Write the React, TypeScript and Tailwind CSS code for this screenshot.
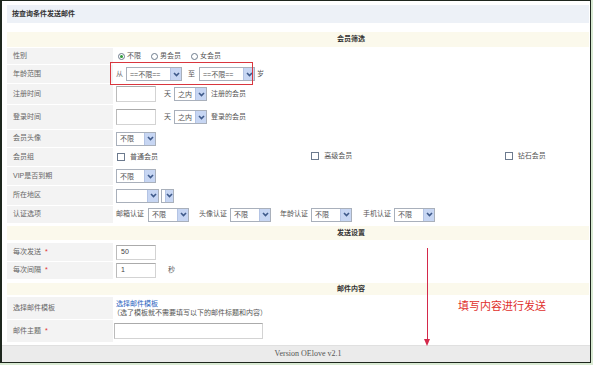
import type { ReactNode } from 'react'

const font = "font-['Liberation_Sans','Noto_Sans_CJK_SC',sans-serif]"

function Chevron() {
  return (
    <svg width="7" height="5" viewBox="0 0 7 5">
      <path d="M1 1 L3.5 3.6 L6 1" fill="none" stroke="#3f5a8a" strokeWidth="1.6" />
    </svg>
  )
}

function Sel({ className, text }: { className: string; text?: string }) {
  return (
    <div className={`flex items-center h-[14px] border border-[#a9b0bb] bg-white ${className}`}>
      <span className="pl-[3px] text-[7px] text-[#555] flex-1 leading-none">{text}</span>
      <div className="w-[11px] h-full bg-[#c7d6f3] border-l border-[#b4c4e4] flex items-center justify-center">
        <Chevron />
      </div>
    </div>
  )
}

function Input({ className, value }: { className: string; value?: string }) {
  return (
    <div
      className={`flex items-center h-[15px] border border-[#d3d3d3] border-t-[#ababab] border-l-[#bbbbbb] bg-white pl-[4px] text-[7px] text-[#444] ${className}`}
    >
      {value}
    </div>
  )
}

function Check({ label }: { label: string }) {
  return (
    <span className="inline-flex items-center gap-[5px]">
      <span className="w-[8px] h-[8px] border border-[#6c7a8e] bg-white" />
      <span className="text-[7px] text-[#555]">{label}</span>
    </span>
  )
}

function Radio({ label, checked }: { label: string; checked?: boolean }) {
  return (
    <span className="inline-flex items-center gap-[2px]">
      <span className="w-[7px] h-[7px] rounded-full border border-[#6d7b8c] bg-white flex items-center justify-center">
        {checked && <span className="w-[3px] h-[3px] rounded-full bg-[#2f9a3a]" />}
      </span>
      <span className="text-[7px] text-[#555]">{label}</span>
    </span>
  )
}

function Row({
  label,
  star,
  h,
  children,
  className = '',
}: {
  label: string
  star?: boolean
  h: string
  children?: ReactNode
  className?: string
}) {
  return (
    <div className={`flex ${h} ${className}`}>
      <div className="w-[106px] shrink-0 bg-[#f3f3f3] flex items-center pl-[6px] text-[7px] text-[#666]">
        {label}
        {star && <span className="ml-[4px] text-[#e03030]">*</span>}
      </div>
      <div className="flex-1 flex items-center pl-[3px] text-[7px] text-[#555] relative">{children}</div>
    </div>
  )
}

function Section({ title, h, className = '' }: { title: string; h: string; className?: string }) {
  return (
    <div className={`flex ${h} bg-[#fbf9ec] ${className}`}>
      <div className="w-[106px] shrink-0" />
      <div className="flex-1 flex items-center justify-center text-[7px] font-bold text-[#333]">{title}</div>
    </div>
  )
}

export default function App() {
  return (
    <div className={`w-[593px] h-[365px] bg-[#d9ead3] ${font}`}>
      <div className="relative w-[591px] h-[363px] bg-white border-l-2 border-t border-r border-b border-[#1d261d] flex flex-col">
        <div className="flex-1 pl-[5px] pr-[1px] pt-[4px] flex flex-col gap-px">
          <div className="h-[18px] bg-[#edf1f7] flex items-center pl-[5px] text-[7px] font-bold text-[#333]">
            按查询条件发送邮件
          </div>
          <Section title="会员筛选" h="h-[15px]" className="mt-[8px]" />
          <Row label="性别" h="h-[16px]">
            <div className="flex items-center gap-[10px] pl-[2px]">
              <Radio label="不限" checked />
              <Radio label="男会员" />
              <Radio label="女会员" />
            </div>
          </Row>
          <Row label="年龄范围" h="h-[18px]">
            <div className="flex items-center">
              <span className="text-[#777]">从</span>
              <Sel className="w-[56px] ml-[3px]" text="==不限==" />
              <span className="ml-[6px]">至</span>
              <Sel className="w-[56px] ml-[4px]" text="==不限==" />
              <span className="ml-[2px]">岁</span>
            </div>
            <div className="absolute left-[-3px] top-[-3px] w-[143px] h-[23px] border-[1.5px] border-[#d9363e]" />
          </Row>
          <Row label="注册时间" h="h-[20px]">
            <Input className="w-[40px] h-[16px]" />
            <span className="ml-[8px]">天</span>
            <Sel className="w-[33px] ml-[3px]" text="之内" />
            <span className="ml-[4px]">注册的会员</span>
          </Row>
          <Row label="登录时间" h="h-[24px]">
            <Input className="w-[40px] h-[16px]" />
            <span className="ml-[8px]">天</span>
            <Sel className="w-[33px] ml-[3px]" text="之内" />
            <span className="ml-[4px]">登录的会员</span>
          </Row>
          <Row label="会员头像" h="h-[17px]">
            <Sel className="w-[40px]" text="不限" />
          </Row>
          <Row label="会员组" h="h-[18px]">
            <div className="flex-1 grid grid-cols-3 pl-[1px]">
              <Check label="普通会员" />
              <span className="pl-[37px]">
                <Check label="高级会员" />
              </span>
              <span className="pl-[73px]">
                <Check label="钻石会员" />
              </span>
            </div>
          </Row>
          <Row label="VIP是否到期" h="h-[18px]">
            <Sel className="w-[40px]" text="不限" />
          </Row>
          <Row label="所在地区" h="h-[19px]">
            <Sel className="w-[43px]" />
            <Sel className="w-[13px] ml-[2px]" />
          </Row>
          <Row label="认证选项" h="h-[17px]">
            <span className="w-[32px]">邮箱认证</span>
            <Sel className="w-[41px]" text="不限" />
            <span className="w-[31px] ml-[10px]">头像认证</span>
            <Sel className="w-[41px]" text="不限" />
            <span className="w-[31px] ml-[9px]">年龄认证</span>
            <Sel className="w-[41px]" text="不限" />
            <span className="w-[31px] ml-[11px]">手机认证</span>
            <Sel className="w-[41px]" text="不限" />
          </Row>
          <Section title="发送设置" h="h-[14px]" className="mt-[2px]" />
          <Row label="每次发送" star h="h-[18px]" className="mt-[2px]">
            <Input className="w-[40px]" value="50" />
          </Row>
          <Row label="每次间隔" star h="h-[17px]">
            <Input className="w-[40px]" value="1" />
            <span className="ml-[12px]">秒</span>
          </Row>
          <Section title="邮件内容" h="h-[12px]" className="mt-[3px]" />
          <Row label="选择邮件模板" h="h-[22px]" className="mt-[1px]">
            <div className="flex flex-col gap-[2px] leading-none">
              <span className="text-[#2a64c0]">选择邮件模板</span>
              <span className="-ml-[3px]">（选了模板就不需要填写以下的邮件标题和内容）</span>
            </div>
          </Row>
          <Row label="邮件主题" star h="h-[22px]">
            <Input className="w-[149px] h-[16px] -ml-[2px]" />
          </Row>
        </div>
        <div className="h-[17px] shrink-0 bg-[#ebebeb] border-t border-[#e0e0e0] flex items-center justify-center pl-[24px] font-['Liberation_Serif',serif] text-[8px] text-[#555]">
          Version OElove v2.1
        </div>

        <div className="absolute left-[425px] top-[247px] w-px h-[92px] bg-[#d4284a]" />
        <div className="absolute left-[422px] top-[338px] w-0 h-0 border-l-[3.5px] border-r-[3.5px] border-t-[7px] border-l-transparent border-r-transparent border-t-[#d4284a]" />
        <div className="absolute left-[456px] top-[296px] text-[11px] text-[#e0302c] font-['Noto_Sans_CJK_SC',sans-serif]">
          填写内容进行发送
        </div>
      </div>
    </div>
  )
}
